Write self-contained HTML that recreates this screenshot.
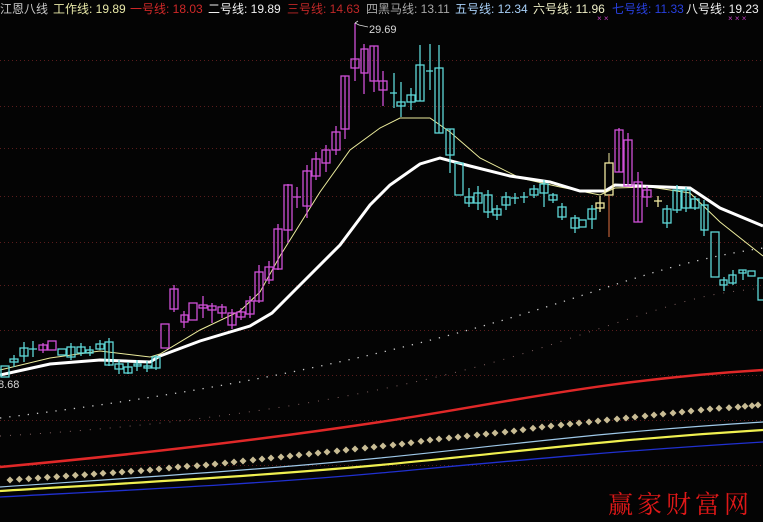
<!DOCTYPE html>
<html><head><meta charset="utf-8"><style>
html,body{margin:0;padding:0;background:#040404;width:763px;height:522px;overflow:hidden;position:relative}
.t{position:absolute;top:2px;font:12px "Liberation Sans","Noto Sans CJK SC",sans-serif;white-space:nowrap;line-height:14px}
svg{position:absolute;left:0;top:0}
</style></head><body>
<svg width="763" height="522" viewBox="0 0 763 522">
<defs><marker id="d" markerWidth="8" markerHeight="8" refX="4" refY="4" markerUnits="userSpaceOnUse"><path d="M4,0.5 L7.5,4 L4,7.5 L0.5,4Z" fill="#c8bc94"/></marker></defs>
<g stroke="#5a1c1c" stroke-width="1" stroke-dasharray="1,3">
<line x1="0" y1="60.5" x2="763" y2="60.5"/><line x1="0" y1="106.5" x2="763" y2="106.5"/><line x1="0" y1="148.5" x2="763" y2="148.5"/><line x1="0" y1="196.5" x2="763" y2="196.5"/><line x1="0" y1="242.5" x2="763" y2="242.5"/><line x1="0" y1="285.5" x2="763" y2="285.5"/><line x1="0" y1="330.5" x2="763" y2="330.5"/><line x1="0" y1="375.5" x2="763" y2="375.5"/><line x1="0" y1="420.5" x2="763" y2="420.5"/><line x1="0" y1="465.5" x2="763" y2="465.5"/>
</g>
<path d="M0,418 C150,400 300,375 450,335 S650,265 763,248" fill="none" stroke="#cccccc" stroke-width="1.3" stroke-dasharray="1.3,8"/>
<path d="M0,436 C200,425 400,395 550,345 S700,295 763,288" fill="none" stroke="#806060" stroke-width="1" stroke-dasharray="1,9"/>
<path d="M0,467 C130,455 260,440 380,422 S600,380 763,370" fill="none" stroke="#e02828" stroke-width="2.5"/>
<polyline fill="none" stroke="none" marker-start="url(#d)" marker-mid="url(#d)" marker-end="url(#d)" points="10,480 19.3,479.3 28.7,478.7 38,478 47.3,477.3 56.7,476.7 66,476 75.3,475.3 84.7,474.7 94,474 103,473.3 113,472.7 122,472 131,471.3 141,470.7 150,470 159,469 169,468 178,467 187,466.3 197,465.7 206,465 215,464 225,463 234,462 243,461 253,460 262,459 271,458 281,457 290,456 299,455 309,454 318,453 327,452 337,451 346,450 355,449 365,448 374,447 383,446 393,445 402,444 411,442.7 421,441.3 430,440 439,439 449,438 458,437 467,436 477,435 486,434 495,433 505,432 514,431 523,429.7 533,428.3 542,427 551,426 561,425 570,424 579,423 589,422 598,421 607,420 617,419 626,418 635,417 645,416 654,415 663,414 673,413 682,412 691,411 701,410 710,409 719,408.3 729,407.7 738,407 745,406.3 752,405.7 758,405"/>
<path d="M0,487 C130,478 260,470 380,458 S600,432 763,422" fill="none" stroke="#9ec8e8" stroke-width="1.2"/>
<path d="M0,491 C130,483 260,476 380,465 S600,440 763,430" fill="none" stroke="#f0f050" stroke-width="2.2"/>
<path d="M0,497 C130,490 260,484 380,473 S600,452 763,442" fill="none" stroke="#2030d0" stroke-width="1.3"/>
<polyline fill="none" stroke="#ecec9c" stroke-width="1" points="0,370 50,358 100,351 150,357 160,354 200,330 240,311 260,292 280,256 320,192 350,150 380,128 400,118 430,118 450,132 480,158 520,178 560,187 600,195 615,188 650,187 690,193 720,222 763,256"/>
<polyline fill="none" stroke="#ffffff" stroke-width="3" points="0,375 50,364 100,360 150,362 160,356 200,341 250,326 272,313 300,285 340,245 370,205 390,185 420,164 440,158 470,166 510,176 550,182 580,191 605,191 615,185 640,186 690,188 720,208 763,226"/>
<g fill="none" stroke="#5fd8d8" stroke-width="1.3">
<rect x="1" y="366" width="8" height="11"/>
<line x1="14" y1="355" x2="14" y2="367"/><rect x="10" y="359" width="8" height="3"/>
<line x1="24" y1="342" x2="24" y2="362"/><rect x="20" y="348" width="8" height="8"/>
<line x1="33" y1="341" x2="33" y2="357"/><line x1="29" y1="349" x2="37" y2="349"/>
<rect x="58" y="349" width="8" height="6"/>
<line x1="71" y1="343" x2="71" y2="360"/><rect x="67" y="347" width="8" height="10"/>
<line x1="81" y1="343" x2="81" y2="356"/><rect x="77" y="347" width="8" height="6"/>
<line x1="90" y1="346" x2="90" y2="356"/><rect x="86" y="350" width="7" height="3"/>
<line x1="100" y1="340" x2="100" y2="350"/><rect x="96" y="344" width="8" height="5"/>
<line x1="109" y1="338" x2="109" y2="366"/><rect x="105" y="342" width="8" height="23"/>
<line x1="119" y1="360" x2="119" y2="374"/><rect x="115" y="364" width="8" height="5"/>
<line x1="128" y1="362" x2="128" y2="374"/><rect x="124" y="367" width="8" height="6"/>
<line x1="137" y1="360" x2="137" y2="371"/><rect x="134" y="364" width="7" height="2"/>
<line x1="147" y1="361" x2="147" y2="372"/><rect x="144" y="366" width="7" height="2"/>
<line x1="156" y1="355" x2="156" y2="370"/><rect x="152" y="357" width="8" height="11"/>
<line x1="394" y1="73" x2="394" y2="108"/><line x1="390" y1="93" x2="397" y2="93"/>
<line x1="401" y1="82" x2="401" y2="117"/><rect x="397" y="102" width="8" height="4"/>
<line x1="411" y1="88" x2="411" y2="110"/><rect x="407" y="95" width="8" height="7"/>
<line x1="420" y1="45" x2="420" y2="101"/><rect x="416" y="65" width="8" height="36"/>
<line x1="430" y1="44" x2="430" y2="90"/><line x1="426" y1="71" x2="433" y2="71"/>
<line x1="439" y1="45" x2="439" y2="133"/><rect x="435" y="68" width="8" height="65"/>
<line x1="450" y1="129" x2="450" y2="173"/><rect x="446" y="129" width="8" height="26"/>
<rect x="455" y="163" width="8" height="32"/>
<line x1="469" y1="188" x2="469" y2="207"/><rect x="465" y="197" width="8" height="6"/>
<line x1="478" y1="186" x2="478" y2="210"/><rect x="474" y="193" width="8" height="10"/>
<line x1="488" y1="190" x2="488" y2="218"/><rect x="484" y="195" width="8" height="17"/>
<line x1="497" y1="205" x2="497" y2="220"/><rect x="493" y="209" width="8" height="6"/>
<line x1="506" y1="192" x2="506" y2="210"/><rect x="502" y="197" width="8" height="8"/>
<line x1="515" y1="193" x2="515" y2="204"/><line x1="511" y1="198" x2="519" y2="198"/>
<line x1="524" y1="192" x2="524" y2="203"/><line x1="520" y1="197" x2="528" y2="197"/>
<line x1="534" y1="185" x2="534" y2="198"/><rect x="530" y="189" width="8" height="6"/>
<line x1="544" y1="180" x2="544" y2="207"/><rect x="540" y="184" width="8" height="9"/>
<line x1="553" y1="193" x2="553" y2="203"/><rect x="549" y="195" width="8" height="5"/>
<line x1="562" y1="203" x2="562" y2="220"/><rect x="558" y="207" width="8" height="10"/>
<line x1="575" y1="215" x2="575" y2="233"/><rect x="571" y="218" width="8" height="10"/>
<rect x="579" y="220" width="7" height="7"/>
<line x1="592" y1="205" x2="592" y2="229"/><rect x="588" y="209" width="8" height="10"/>
<line x1="667" y1="205" x2="667" y2="228"/><rect x="663" y="209" width="8" height="14"/>
<line x1="677" y1="185" x2="677" y2="213"/><rect x="673" y="190" width="8" height="20"/>
<line x1="686" y1="187" x2="686" y2="212"/><rect x="682" y="190" width="8" height="18"/>
<line x1="695" y1="196" x2="695" y2="210"/><rect x="691" y="199" width="8" height="9"/>
<line x1="704" y1="200" x2="704" y2="236"/><rect x="701" y="205" width="7" height="25"/>
<rect x="711" y="232" width="8" height="45"/>
<line x1="724" y1="277" x2="724" y2="291"/><rect x="720" y="280" width="7" height="5"/>
<line x1="733" y1="270" x2="733" y2="285"/><rect x="729" y="275" width="7" height="8"/>
<line x1="743" y1="270" x2="743" y2="280"/><rect x="739" y="270" width="7" height="3"/>
<rect x="748" y="271" width="7" height="5"/>
<rect x="758" y="278" width="8" height="22"/>
</g>
<g fill="none" stroke="#d050d8" stroke-width="1.3">
<line x1="43" y1="343" x2="43" y2="353"/><rect x="39" y="345" width="8" height="5"/>
<rect x="48" y="341" width="8" height="9"/>
<rect x="161" y="324" width="8" height="24"/>
<line x1="174" y1="285" x2="174" y2="312"/><rect x="170" y="289" width="8" height="20"/>
<line x1="184" y1="311" x2="184" y2="328"/><rect x="181" y="315" width="7" height="7"/>
<rect x="189" y="303" width="8" height="17"/>
<line x1="203" y1="296" x2="203" y2="318"/><rect x="199" y="305" width="8" height="3"/>
<line x1="212" y1="303" x2="212" y2="323"/><rect x="208" y="306" width="8" height="4"/>
<line x1="222" y1="304" x2="222" y2="318"/><rect x="218" y="307" width="8" height="6"/>
<line x1="232" y1="309" x2="232" y2="329"/><rect x="228" y="313" width="8" height="12"/>
<line x1="241" y1="308" x2="241" y2="320"/><rect x="237" y="312" width="8" height="5"/>
<line x1="250" y1="296" x2="250" y2="318"/><rect x="246" y="301" width="8" height="13"/>
<line x1="259" y1="265" x2="259" y2="303"/><rect x="255" y="272" width="8" height="29"/>
<line x1="269" y1="261" x2="269" y2="284"/><rect x="265" y="267" width="8" height="13"/>
<line x1="278" y1="224" x2="278" y2="270"/><rect x="274" y="229" width="8" height="40"/>
<line x1="288" y1="184" x2="288" y2="243"/><rect x="284" y="185" width="8" height="45"/>
<line x1="297" y1="187" x2="297" y2="208"/><line x1="293" y1="197" x2="301" y2="197"/>
<line x1="307" y1="165" x2="307" y2="218"/><rect x="303" y="171" width="8" height="35"/>
<line x1="316" y1="152" x2="316" y2="180"/><rect x="312" y="159" width="8" height="17"/>
<line x1="326" y1="145" x2="326" y2="172"/><rect x="322" y="150" width="8" height="13"/>
<line x1="336" y1="126" x2="336" y2="155"/><rect x="332" y="132" width="8" height="18"/>
<line x1="345" y1="76" x2="345" y2="139"/><rect x="341" y="76" width="8" height="53"/>
<line x1="355" y1="23" x2="355" y2="81"/><rect x="351" y="59" width="8" height="9"/>
<line x1="364" y1="44" x2="364" y2="94"/><rect x="361" y="49" width="7" height="24"/>
<line x1="374" y1="46" x2="374" y2="92"/><rect x="370" y="46" width="8" height="35"/>
<line x1="383" y1="71" x2="383" y2="106"/><rect x="379" y="81" width="8" height="9"/>
<line x1="619" y1="128" x2="619" y2="172"/><rect x="615" y="130" width="8" height="42"/>
<line x1="628" y1="133" x2="628" y2="186"/><rect x="624" y="140" width="8" height="46"/>
<line x1="638" y1="172" x2="638" y2="222"/><rect x="634" y="182" width="8" height="40"/>
<line x1="647" y1="186" x2="647" y2="207"/><rect x="643" y="190" width="8" height="7"/>
</g>
<g fill="none" stroke="#f0e8a0" stroke-width="1.3">
<line x1="600" y1="196" x2="600" y2="212"/><rect x="596" y="203" width="8" height="5"/>
<rect x="605" y="163" width="8" height="32"/>
<line x1="658" y1="196" x2="658" y2="207"/><line x1="654" y1="201" x2="662" y2="201"/>
</g>
<line x1="609" y1="153" x2="609" y2="163" stroke="#f0e8a0"/>
<line x1="609" y1="195" x2="609" y2="237" stroke="#e07040"/>
<path d="M355,23 l3,-2 M355,23 l4,2 L368,27" stroke="#ddd" fill="none" stroke-width="0.8"/>
<text x="369" y="33" font-family="Liberation Sans" font-size="11" fill="#d8d8d8">29.69</text>
<text x="-2" y="388" font-family="Liberation Sans" font-size="11" fill="#d8d8d8">8.68</text>
<g fill="#c040c0" font-family="Liberation Sans" font-size="8">
<text x="597" y="21">× ×</text><text x="728" y="21">× × ×</text>
</g>
</svg>
<div class="t" style="left:0;color:#c8c8c8">江恩八线</div>
<div class="t" style="left:53px;color:#e8e8a8">工作线: 19.89</div>
<div class="t" style="left:130px;color:#d02828">一号线: 18.03</div>
<div class="t" style="left:208px;color:#f0f0f0">二号线: 19.89</div>
<div class="t" style="left:287px;color:#c02828">三号线: 14.63</div>
<div class="t" style="left:366px;color:#a8a8a8">四黑马线: 13.11</div>
<div class="t" style="left:455px;color:#a8d0f8">五号线: 12.34</div>
<div class="t" style="left:533px;color:#f0f0c8">六号线: 11.96</div>
<div class="t" style="left:612px;color:#2840e0">七号线: 11.33</div>
<div class="t" style="left:686px;color:#f0f0f0">八号线: 19.23</div>
<div style="position:absolute;left:608px;top:485px;font:25px 'Noto Serif CJK SC','Liberation Serif',serif;color:#e01818;letter-spacing:4px;white-space:nowrap">赢家财富网</div>
</body></html>
